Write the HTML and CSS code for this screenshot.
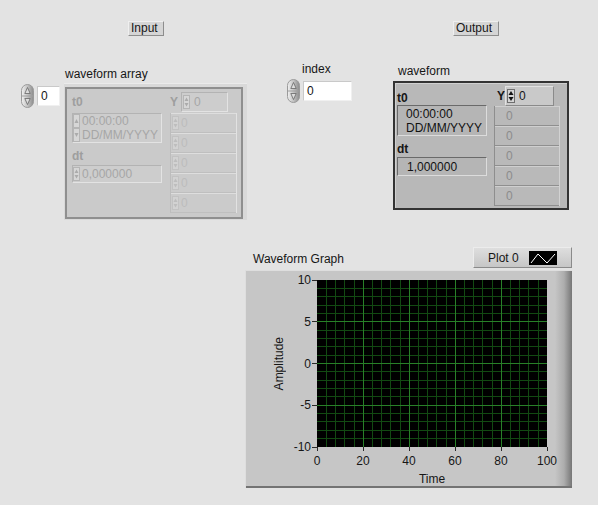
FILE: index.html
```html
<!DOCTYPE html>
<html lang="en">
<head>
  <meta charset="UTF-8" />
  <title>Waveform panel</title>
  <link rel="stylesheet" href="styles.css">
</head>
<body>
<svg class="defs">
  <defs>
    <linearGradient id="spinGrad" x1="0" x2="1">
      <stop offset="0" stop-color="#f2f2f2"/>
      <stop offset="0.55" stop-color="#bdbdbd"/>
      <stop offset="1" stop-color="#8c8c8c"/>
    </linearGradient>
  </defs>
</svg>

<div class="panel">
  <div class="tag tag-in">Input</div>
  <div class="tag tag-out">Output</div>

  <!-- index of the input array -->
  <div class="ctl idx idx-in">
    <svg class="spin" width="13" height="24" viewBox="0 0 13 24"><rect x="0.5" y="0.5" width="12" height="23" rx="6" fill="url(#spinGrad)" stroke="#9a9a9a"/><path d="M1 12H12" stroke="#a0a0a0"/><path d="M3.8 9.5L6.5 3.5L9.2 9.5Z" fill="#dcdcdc" stroke="#666" stroke-width="0.8"/><path d="M3.8 14.5L6.5 20.5L9.2 14.5Z" fill="#dcdcdc" stroke="#666" stroke-width="0.8"/></svg>
    <div class="num num-in">0</div>
  </div>

  <div class="ctl wf-in">
    <div class="lbl">waveform array</div>
    <div class="arr-frame">
      <div class="arr-inner">
        <div class="wf-col">
          <div class="fld fld-t0">t0</div>
          <div class="box in-box t0-box">
            <svg class="ms" width="7" height="28" viewBox="0 0 7 28"><rect class="ms-bg" x=".5" y=".5" width="6" height="13"/><rect class="ms-bg" x=".5" y="14.5" width="6" height="13"/><path class="ms-ar" d="M1.5 9L3.5 5L5.5 9ZM1.5 19L3.5 23L5.5 19Z"/></svg>
            <div class="t0-text">00:00:00<br>DD/MM/YYYY</div>
          </div>
          <div class="fld fld-dt">dt</div>
          <div class="box in-box dt-box">
            <svg class="ms" width="7" height="14" viewBox="0 0 7 14"><rect class="ms-bg" x=".5" y=".5" width="6" height="13"/><path class="ms-ar" d="M1.5 6L3.5 2.5L5.5 6ZM1.5 8L3.5 11.5L5.5 8Z"/></svg>
            <span>0,000000</span>
          </div>
        </div>
        <div class="ycol">
          <div class="yhead">
            <span class="fld ylbl">Y</span>
            <div class="box in-box yspin">
              <svg class="ms" width="7" height="14" viewBox="0 0 7 14"><rect class="ms-bg" x=".5" y=".5" width="6" height="13"/><path class="ms-ar" d="M1.5 6L3.5 2.5L5.5 6ZM1.5 8L3.5 11.5L5.5 8Z"/></svg>
              <span>0</span>
            </div>
          </div>
          <div class="ylist">
            <div class="yrow"><svg class="ms faint" width="7" height="14" viewBox="0 0 7 14"><rect class="ms-bg" x=".5" y=".5" width="6" height="13"/><path class="ms-ar" d="M1.5 6L3.5 2.5L5.5 6ZM1.5 8L3.5 11.5L5.5 8Z"/></svg><span>0</span></div>
            <div class="yrow"><svg class="ms faint" width="7" height="14" viewBox="0 0 7 14"><rect class="ms-bg" x=".5" y=".5" width="6" height="13"/><path class="ms-ar" d="M1.5 6L3.5 2.5L5.5 6ZM1.5 8L3.5 11.5L5.5 8Z"/></svg><span>0</span></div>
            <div class="yrow"><svg class="ms faint" width="7" height="14" viewBox="0 0 7 14"><rect class="ms-bg" x=".5" y=".5" width="6" height="13"/><path class="ms-ar" d="M1.5 6L3.5 2.5L5.5 6ZM1.5 8L3.5 11.5L5.5 8Z"/></svg><span>0</span></div>
            <div class="yrow"><svg class="ms faint" width="7" height="14" viewBox="0 0 7 14"><rect class="ms-bg" x=".5" y=".5" width="6" height="13"/><path class="ms-ar" d="M1.5 6L3.5 2.5L5.5 6ZM1.5 8L3.5 11.5L5.5 8Z"/></svg><span>0</span></div>
            <div class="yrow"><svg class="ms faint" width="7" height="14" viewBox="0 0 7 14"><rect class="ms-bg" x=".5" y=".5" width="6" height="13"/><path class="ms-ar" d="M1.5 6L3.5 2.5L5.5 6ZM1.5 8L3.5 11.5L5.5 8Z"/></svg><span>0</span></div>
          </div>
        </div>
      </div>
    </div>
  </div>

  <!-- index control in the middle -->
  <div class="ctl idx-mid">
    <div class="lbl">index</div>
    <div class="idx">
      <svg class="spin" width="13" height="24" viewBox="0 0 13 24"><rect x="0.5" y="0.5" width="12" height="23" rx="6" fill="url(#spinGrad)" stroke="#9a9a9a"/><path d="M1 12H12" stroke="#a0a0a0"/><path d="M3.8 9.5L6.5 3.5L9.2 9.5Z" fill="#dcdcdc" stroke="#666" stroke-width="0.8"/><path d="M3.8 14.5L6.5 20.5L9.2 14.5Z" fill="#dcdcdc" stroke="#666" stroke-width="0.8"/></svg>
      <div class="num num-mid">0</div>
    </div>
  </div>

  <div class="ctl wf-out">
    <div class="lbl">waveform</div>
    <div class="out-frame">
      <div class="wf-col">
        <div class="fld fld-t0">t0</div>
        <div class="box out-box t0-box">
          <div class="t0-text">00:00:00<br>DD/MM/YYYY</div>
        </div>
        <div class="fld fld-dt">dt</div>
        <div class="box out-box dt-box"><span>1,000000</span></div>
      </div>
      <div class="ycol">
        <div class="yhead">
          <span class="fld ylbl">Y</span>
          <div class="box yspin">
            <svg class="ms dark" width="8" height="14" viewBox="0 0 8 14"><rect class="ms-bg" x=".5" y=".5" width="7" height="13"/><path class="ms-ar" d="M1.5 6L4 2L6.5 6ZM1.5 8L4 12L6.5 8Z"/></svg>
            <span>0</span>
          </div>
        </div>
        <div class="ylist">
          <div class="yrow">0</div>
          <div class="yrow">0</div>
          <div class="yrow">0</div>
          <div class="yrow">0</div>
          <div class="yrow">0</div>
        </div>
      </div>
    </div>
  </div>

  <div class="ctl g-lbl">Waveform Graph</div>
  <div class="ctl legend">
    <span>Plot 0</span>
    <svg class="swatch" width="28" height="14" viewBox="0 0 28 14"><rect width="28" height="14" fill="#000"/><path d="M2 12L9 3L18 12L26 3" stroke="#fff" stroke-width="1" fill="none"/></svg>
  </div>

  <div class="ctl graph">
    <div class="g-title">Amplitude</div>
    <div class="g-yax">
      <div class="ytk">10</div>
      <div class="ytk">5</div>
      <div class="ytk">0</div>
      <div class="ytk">-5</div>
      <div class="ytk">-10</div>
    </div>
    <svg class="plot" width="230" height="167" viewBox="0 0 230 167">
      <rect width="230" height="167" fill="#000"/>
      <path class="minor" d="M9.5 0V167M18.5 0V167M27.5 0V167M37.5 0V167M55.5 0V167M64.5 0V167M73.5 0V167M83.5 0V167M101.5 0V167M110.5 0V167M119.5 0V167M129.5 0V167M147.5 0V167M156.5 0V167M165.5 0V167M175.5 0V167M193.5 0V167M202.5 0V167M211.5 0V167M221.5 0V167M0 8.5H230M0 16.5H230M0 25.5H230M0 33.5H230M0 50.5H230M0 58.5H230M0 66.5H230M0 75.5H230M0 91.5H230M0 100.5H230M0 108.5H230M0 116.5H230M0 133.5H230M0 141.5H230M0 150.5H230M0 158.5H230"/>
      <path class="major" d="M46.5 0V167M92.5 0V167M138.5 0V167M184.5 0V167M0 41.5H230M0 83.5H230M0 125.5H230"/>
    </svg>
    <div class="g-xax">
      <div class="xticks">
        <div class="xtk"><span>0</span></div>
        <div class="xtk"><span>20</span></div>
        <div class="xtk"><span>40</span></div>
        <div class="xtk"><span>60</span></div>
        <div class="xtk"><span>80</span></div>
        <div class="xtk"><span>100</span></div>
      </div>
      <div class="g-time">Time</div>
    </div>
  </div>
</div>
</body>
</html>
```

FILE: styles.css
```css
* {
  box-sizing: border-box;
}
body {
  margin: 0;
  background-color: #e3e3e3;
  font-family: "Liberation Sans", Arial, sans-serif;
  font-size: 12px;
  color: #161616;
}
.defs {
  position: absolute;
  width: 0;
  height: 0;
}
.panel {
  position: relative;
  width: 598px;
  height: 505px;
  overflow: hidden;
}
/* controls sit on the free front-panel canvas */
.ctl {
  position: absolute;
}
.lbl {
  line-height: 14px;
  white-space: nowrap;
}

/* free labels */
.tag {
  position: absolute;
  top: 21px;
  height: 15px;
  line-height: 13px;
  padding: 0 2px;
  background-color: #d5d5d5;
  border: 1px solid;
  border-color: #efefef #8d8d8d #8d8d8d #efefef;
}
.tag-in {
  left: 128px;
  width: 36px;
}
.tag-out {
  left: 453px;
  width: 46px;
}

/* numeric index controls */
.idx {
  display: flex;
  align-items: center;
  gap: 3px;
}
.idx-in {
  left: 21px;
  top: 84px;
}
.idx-mid {
  left: 287px;
  top: 62px;
}
.idx-mid .lbl {
  margin-left: 15px;
  margin-bottom: 3px;
}
.spin {
  display: block;
}
.num {
  height: 20px;
  line-height: 18px;
  padding-left: 3px;
  background-color: #fff;
  border: 1px solid;
  border-color: #c9c9c9 #f0f0f0 #f0f0f0 #c9c9c9;
}
.num-in {
  width: 23px;
}
.num-mid {
  width: 49px;
}

/* mini spinners */
.ms {
  display: block;
  flex: none;
}
.ms-bg {
  fill: #d6d6d6;
  stroke: #b5b5b5;
}
.ms-ar {
  fill: #ababab;
}
.ms.faint .ms-bg {
  fill: #d2d2d2;
  stroke: #c2c2c2;
}
.ms.faint .ms-ar {
  fill: #bdbdbd;
}
.ms.dark .ms-bg {
  fill: #d4d4d4;
  stroke: #6e6e6e;
}
.ms.dark .ms-ar {
  fill: #111;
}

/* shared cluster pieces */
.wf-col {
  width: 90px;
  display: flex;
  flex-direction: column;
}
.fld {
  font-weight: bold;
  line-height: 14px;
}
.box {
  display: flex;
  align-items: center;
  border: 1px solid;
}
.t0-text {
  line-height: 14px;
}
.ycol {
  display: flex;
  flex-direction: column;
}
.yhead {
  display: flex;
  align-items: center;
  height: 20px;
}
.ylbl {
  width: 11px;
}
.yspin {
  height: 20px;
  gap: 4px;
  padding-left: 1px;
}
.yrow {
  height: 20px;
  display: flex;
  align-items: center;
}

/* input waveform array (disabled look) */
.wf-in {
  left: 64px;
  top: 67px;
}
.wf-in .lbl {
  margin-left: 1px;
  margin-bottom: 2px;
}
.arr-frame {
  width: 183px;
  height: 137px;
  padding: 3px 4px 1px 1px;
  background-color: #d9d9d9;
  border-top: 1px solid #ebebeb;
}
.arr-inner {
  height: 100%;
  display: flex;
  gap: 8px;
  padding: 3px 4px 0 5px;
  border: 2px solid #8f8f8f;
  background-color: #cacaca;
  overflow: hidden;
}
.wf-in .fld {
  color: #9e9e9e;
}
.wf-in .fld-t0 {
  margin-top: 3px;
  margin-bottom: 4px;
}
.wf-in .fld-dt {
  margin-top: 6px;
  margin-bottom: 2px;
}
.in-box {
  background-color: #cdcdcd;
  border-color: #b3b3b3 #e3e3e3 #e3e3e3 #b3b3b3;
  color: #a6a6a6;
}
.wf-in .t0-box {
  height: 30px;
  gap: 2px;
}
.wf-in .dt-box {
  height: 18px;
  gap: 2px;
}
.wf-in .ycol {
  width: 67px;
}
.wf-in .yspin {
  width: 47px;
}
.wf-in .ylist {
  margin-top: 1px;
  border-left: 1px solid #bdbdbd;
  border-right: 1px solid #e2e2e2;
}
.wf-in .yrow {
  gap: 2px;
  padding-left: 1px;
  color: #bcbcbc;
  background-color: #cbcbcb;
  border-top: 1px solid #dedede;
  border-bottom: 1px solid #bfbfbf;
}

/* output waveform indicator */
.wf-out {
  left: 393px;
  top: 64px;
}
.wf-out .lbl {
  margin-left: 5px;
  margin-bottom: 3px;
}
.out-frame {
  width: 176px;
  height: 129px;
  display: flex;
  gap: 7px;
  padding: 3px 7px 0 2px;
  border: 2px solid #333;
  background-color: #b8b8b8;
  box-shadow: inset 1px 1px 0 #d0d0d0;
}
.wf-out .fld-t0 {
  margin-top: 5px;
}
.wf-out .fld-dt {
  margin-top: 6px;
  margin-bottom: 1px;
}
.out-box {
  background-color: #b5b5b5;
  border-color: #6a6a6a #dcdcdc #dcdcdc #6a6a6a;
  color: #111;
  padding-left: 9px;
}
.wf-out .t0-box {
  height: 31px;
  padding-left: 8px;
}
.wf-out .dt-box {
  height: 19px;
}
.wf-out .ycol {
  width: 66px;
}
.wf-out .ylbl {
  padding-left: 3px;
}
.wf-out .yspin {
  width: 49px;
  background-color: #c9c9c9;
  border-color: #e2e2e2 #8a8a8a #8a8a8a #e2e2e2;
}
.wf-out .ylist {
  border-left: 1px solid #8e8e8e;
  border-right: 1px solid #d2d2d2;
}
.wf-out .yrow {
  padding-left: 11px;
  color: #8c8c8c;
  background-color: #b9b9b9;
  border-top: 1px solid #cfcfcf;
  border-bottom: 1px solid #8f8f8f;
}

/* waveform graph */
.g-lbl {
  left: 253px;
  top: 252px;
  line-height: 14px;
}
.legend {
  left: 473px;
  top: 247px;
  width: 99px;
  height: 21px;
  display: flex;
  align-items: center;
  padding-left: 14px;
  line-height: 14px;
  background: linear-gradient(#dedede, #c6c6c6);
  border: 1px solid;
  border-color: #ececec #8a8a8a #8a8a8a #ececec;
}
.swatch {
  display: block;
  margin-left: 10px;
}
.graph {
  left: 245px;
  top: 270px;
  width: 327px;
  height: 218px;
  display: grid;
  grid-template-columns: 43px 29px 230px 1fr;
  grid-template-rows: 10px 167px 1fr;
  background: linear-gradient(to right, #c6c6c6 0, #c6c6c6 310px, #adadad 319px, #767676 327px);
  box-shadow: inset 1px 1px 0 #dedede, inset 0 -2px 0 #737373;
}
.g-title {
  grid-column: 1;
  grid-row: 2;
  justify-self: end;
  align-self: center;
  margin-right: 2px;
  line-height: 14px;
  writing-mode: vertical-rl;
  transform: rotate(180deg);
}
.g-yax {
  grid-column: 2;
  grid-row: 2;
  height: 181px;
  margin-top: -7px;
  display: flex;
  flex-direction: column;
  justify-content: space-between;
}
.ytk {
  height: 14px;
  line-height: 14px;
  display: flex;
  align-items: center;
  justify-content: flex-end;
}
.ytk::after {
  content: "";
  width: 5px;
  height: 1px;
  margin-left: 1px;
  background-color: #2a2a2a;
}
.plot {
  grid-column: 3;
  grid-row: 2;
  display: block;
}
.plot .minor {
  stroke: #124a12;
  stroke-width: 1;
}
.plot .major {
  stroke: #288028;
  stroke-width: 1;
}
.g-xax {
  grid-column: 3;
  grid-row: 3;
  display: flex;
  flex-direction: column;
  align-items: center;
}
.xticks {
  width: 254px;
  flex: none;
  display: flex;
  justify-content: space-between;
}
.xtk {
  width: 24px;
  display: flex;
  flex-direction: column;
  align-items: center;
}
.xtk::before {
  content: "";
  width: 1px;
  height: 4px;
  background-color: #2a2a2a;
}
.xtk span {
  margin-top: 3px;
  line-height: 14px;
}
.g-time {
  margin-top: 4px;
  line-height: 14px;
}
```
